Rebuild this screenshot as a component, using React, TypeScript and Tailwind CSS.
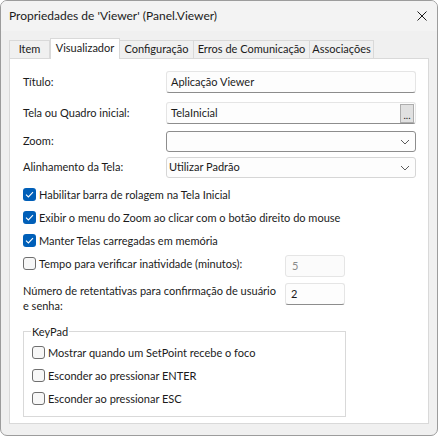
import React from 'react';

const FONT = '"Segoe UI", Lato, "Noto Sans", Arial, sans-serif';

function Check({ checked }: { checked?: boolean }) {
  if (checked) {
    return (
      <span className="flex h-[13px] w-[13px] shrink-0 items-center justify-center rounded-[3px] bg-[#005fb8]">
        <svg width="9" height="7" viewBox="0 0 9 7" fill="none">
          <path d="M1 3.6 L3.4 6 L8 1.2" stroke="#ffffff" strokeWidth="1.1" />
        </svg>
      </span>
    );
  }
  return <span className="h-[13px] w-[13px] shrink-0 rounded-[3px] border border-[#6f6f6f] bg-[#f7f7f7]" />;
}

function CheckRow({ label, checked, className = '' }: { label: string; checked?: boolean; className?: string }) {
  return (
    <div className={`flex h-[15px] items-center gap-[3px] ${className}`}>
      <Check checked={checked} />
      <span className="leading-[15px]">{label}</span>
    </div>
  );
}

function Chevron() {
  return (
    <svg width="10" height="6" viewBox="0 0 10 6" fill="none">
      <path d="M1 1 L5 5 L9 1" stroke="#5c5c5c" strokeWidth="1" />
    </svg>
  );
}

const tabs: { label: string; w: string }[] = [
  { label: 'Item', w: 'w-[41px]' },
  { label: 'Visualizador', w: 'w-[70px]' },
  { label: 'Configuração', w: 'w-[75px]' },
  { label: 'Erros de Comunicação', w: 'w-[117px]' },
  { label: 'Associações', w: 'w-[65px]' },
];

export default function App() {
  return (
    <div
      className="relative flex h-[436px] w-[438px] flex-col overflow-hidden rounded-[7px] border border-[#9c9c9c] bg-[#f0f0f0] text-[11px] text-[#1b1b1b]"
      style={{ fontFamily: FONT }}
    >
      {/* title bar */}
      <div className="flex h-[30px] shrink-0 items-center justify-between bg-[#f3f3f3] pl-[8px] pr-[10px]">
        <span className="text-[12px]">Propriedades de 'Viewer' (Panel.Viewer)</span>
        <svg width="10" height="10" viewBox="0 0 10 10" fill="none">
          <path d="M0.5 0.5 L9.5 9.5 M9.5 0.5 L0.5 9.5" stroke="#1b1b1b" strokeWidth="1" />
        </svg>
      </div>

      {/* tabs */}
      <div className="mt-[7px] flex h-[20px] items-end pl-[8px]">
        {tabs.map((t, i) => {
          const active = i === 1;
          return (
            <div
              key={t.label}
              className={
                active
                  ? `relative z-10 -mb-px flex h-[21px] items-start justify-center border border-b-0 border-[#d9d9d9] bg-white pt-[1px] ${t.w}`
                  : `flex h-[18px] items-center justify-center border border-b-0 border-[#d9d9d9] bg-[#f0f0f0] ${t.w} ${i === 0 ? '' : '-ml-px'}`
              }
            >
              {t.label}
            </div>
          );
        })}
      </div>

      {/* panel */}
      <div className="mx-[8px] flex h-[366px] flex-col border border-[#d9d9d9] bg-white pl-[13px] pr-[12px] pt-[12px]">
        <div className="flex h-[22px] items-center">
          <span className="w-[143px]">Título:</span>
          <div className="flex h-[22px] flex-1 items-center rounded-[3px] border border-[#e5e5e5] border-b-[#8d8d8d] bg-[#fdfdfd] px-[4px]">
            Aplicação Viewer
          </div>
        </div>

        <div className="mt-[9px] flex h-[22px] items-center">
          <span className="w-[143px]">Tela ou Quadro inicial:</span>
          <div className="flex h-[22px] flex-1 items-center justify-between rounded-[3px] border border-[#e5e5e5] border-b-[#8d8d8d] bg-[#fdfdfd] pl-[4px] pr-[1px]">
            <span>TelaInicial</span>
            <span className="flex h-[19px] w-[14px] items-end justify-center border border-[#adadad] bg-[#e1e1e1] pb-[2px] text-[10px] leading-[10px]">
              ...
            </span>
          </div>
        </div>

        <div className="mt-[7px] flex h-[21px] items-center">
          <span className="w-[143px]">Zoom:</span>
          <div className="flex h-[21px] flex-1 items-center justify-end rounded-[3px] border border-[#8d8d8d] bg-[#fdfdfd] pr-[5px]">
            <Chevron />
          </div>
        </div>

        <div className="mt-[5px] flex h-[21px] items-center">
          <span className="w-[143px]">Alinhamento da Tela:</span>
          <div className="flex h-[21px] flex-1 items-center justify-between rounded-[3px] border border-[#d6d6d6] bg-[#fdfdfd] pl-[2px] pr-[5px]">
            <span>Utilizar Padrão</span>
            <Chevron />
          </div>
        </div>

        <CheckRow className="mt-[9px]" checked label="Habilitar barra de rolagem na Tela Inicial" />
        <CheckRow className="mt-[8px]" checked label="Exibir o menu do Zoom ao clicar com o botão direito do mouse" />
        <CheckRow className="mt-[8px]" checked label="Manter Telas carregadas em memória" />

        <div className="mt-[8px] flex items-start">
          <CheckRow className="w-[262px]" label="Tempo para verificar inatividade (minutos):" />
          <div className="-mt-px flex h-[22px] w-[60px] items-center rounded-[3px] border border-[#e5e5e5] bg-[#fbfbfb] px-[6px] text-[#8a8a8a]">
            5
          </div>
        </div>

        <div className="mt-[6px] flex items-start">
          <span className="mr-[6px] w-[256px] leading-[15px]">
            Número de retentativas para confirmação de usuário e senha:
          </span>
          <div className="flex h-[22px] w-[60px] items-center rounded-[3px] border border-[#e5e5e5] border-b-[#8d8d8d] bg-[#fdfdfd] px-[5px]">
            2
          </div>
        </div>

        {/* KeyPad group */}
        <div className="relative mt-[18px] h-[86px] w-[323px] border border-[#d9d9d9] pl-[8px] pt-[13px]">
          <span className="absolute left-[7px] top-[-8px] bg-white px-[1px] leading-[15px]">KeyPad</span>
          <CheckRow label="Mostrar quando um SetPoint recebe o foco" />
          <CheckRow className="mt-[8px]" label="Esconder ao pressionar ENTER" />
          <CheckRow className="mt-[8px]" label="Esconder ao pressionar ESC" />
        </div>
      </div>
    </div>
  );
}
